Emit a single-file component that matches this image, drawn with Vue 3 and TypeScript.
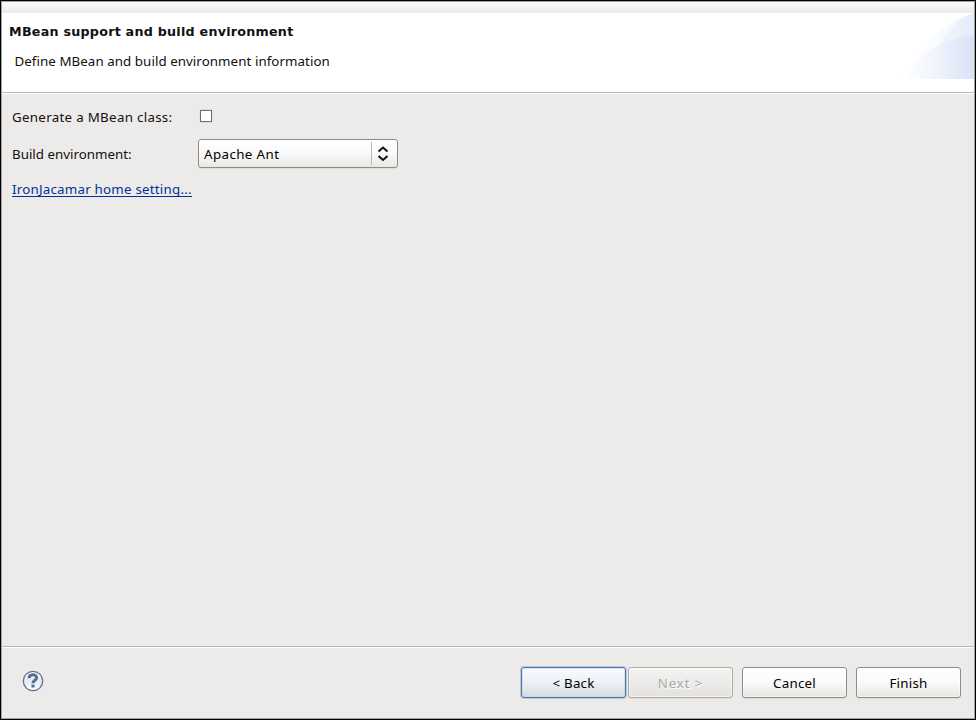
<script setup lang="ts">
import { ref } from 'vue'

interface WizardButton {
  label: string
  kind: 'focused' | 'disabled' | 'normal'
}

const generateMBean = ref(false)
const environment = ref('Apache Ant')
const navigation: WizardButton[] = [
  { label: '< Back', kind: 'focused' },
  { label: 'Next >', kind: 'disabled' },
]
const actions: WizardButton[] = [
  { label: 'Cancel', kind: 'normal' },
  { label: 'Finish', kind: 'normal' },
]
</script>

<template>
  <main class="wizard">
    <div class="strip"></div>
    <header class="banner">
      <div class="heading">
        <h1>MBean support and build environment</h1>
        <p>Define MBean and build environment information</p>
      </div>
      <svg class="swoosh" width="74" height="66" viewBox="0 0 74 66">
        <defs>
          <linearGradient id="outer" x1="0" x2="1">
            <stop offset="0" stop-color="#fff" />
            <stop offset=".45" stop-color="#f9fbfe" />
            <stop offset="1" stop-color="#f0f4fc" />
          </linearGradient>
          <linearGradient id="middle" x1="0" x2="1">
            <stop offset="0" stop-color="#f7f9fe" />
            <stop offset="1" stop-color="#e5ecf9" />
          </linearGradient>
          <linearGradient id="inner" x1="0" x2="1">
            <stop offset="0" stop-color="#fff" />
            <stop offset=".4" stop-color="#f3f6fd" />
            <stop offset="1" stop-color="#d9e2f6" />
          </linearGradient>
        </defs>
        <path d="M4 66C18 39 40 9 74 0V66Z" fill="url(#outer)" />
        <path d="M28 66C34 36 51 7 74 0V66Z" fill="url(#middle)" />
        <path d="M2 66C18 43 42 25 74 22V66Z" fill="url(#inner)" />
      </svg>
    </header>

    <section class="body">
      <label class="row check-row">
        <span class="name wide">Generate a MBean class:</span>
        <input v-model="generateMBean" class="check" type="checkbox" />
      </label>
      <div class="row combo-row">
        <span class="name">Build environment:</span>
        <button class="combo" type="button">
          <span class="value">{{ environment }}</span>
          <span class="arrows">
            <svg width="12" height="16" viewBox="0 0 12 16" fill="none" stroke="#111" stroke-width="2">
              <path d="M1.5 5.5L6 1.5L10.5 5.5M1.5 10L6 14L10.5 10" />
            </svg>
          </span>
        </button>
      </div>
      <div class="row link-row"><a class="link">IronJacamar home setting...</a></div>
    </section>

    <footer class="footer">
      <svg class="help" width="22" height="22" viewBox="0 0 22 22">
        <defs>
          <linearGradient id="disc" x2="0" y2="1">
            <stop stop-color="#fff" />
            <stop offset=".5" stop-color="#e6e9ee" />
            <stop offset="1" stop-color="#fff" />
          </linearGradient>
        </defs>
        <circle cx="11" cy="11" r="9.7" fill="url(#disc)" stroke="#5b7397" stroke-width="1.3" />
        <path d="M7.1 8.3C7.1 3.8 14.6 3.8 14.6 7.7C14.6 10.3 11 10.3 11 13.2" fill="none" stroke="#576e94" stroke-width="3" />
        <path d="M9.4 14.6h3.2v2.9H9.4z" fill="#576e94" />
      </svg>
      <div class="buttons">
        <div class="group">
          <button v-for="b in navigation" :key="b.label" type="button" class="btn" :class="b.kind" :disabled="b.kind === 'disabled'">{{ b.label }}</button>
        </div>
        <button v-for="b in actions" :key="b.label" type="button" class="btn" :class="b.kind">{{ b.label }}</button>
      </div>
    </footer>
  </main>
</template>

<style>
body {
  margin: 0;
  overflow: hidden;
}
</style>

<style scoped>
* {
  box-sizing: border-box;
}
.wizard {
  width: 976px;
  height: 720px;
  display: flex;
  flex-direction: column;
  border: 1px solid #000;
  box-shadow: inset 0 0 0 1px #a4a2a0;
  padding: 1px;
  background: #edebe9;
  background-clip: content-box;
  font: 13.33px/20px "Noto Sans", "Open Sans", sans-serif;
  color: #111;
  white-space: nowrap;
}
.strip {
  height: 11px;
  flex: none;
  background: linear-gradient(#fcfbfb, #ebeae8);
}
.banner {
  height: 80px;
  flex: none;
  display: flex;
  justify-content: space-between;
  background: #fff;
  border-bottom: 1px solid #b9b8b5;
}
h1 {
  margin: 9px 0 0 7px;
  font: bold 12.7px/20px "DejaVu Sans", sans-serif;
  letter-spacing: 0.25px;
}
p {
  margin: 9px 0 0 12.5px;
  letter-spacing: 0.06px;
}
.swoosh {
  display: block;
}
.body {
  flex: 1;
  border-top: 1px solid #fff;
  padding: 13px 10px 0;
}
.row {
  display: flex;
}
.name {
  width: 186px;
  flex: none;
}
.wide {
  letter-spacing: 0.3px;
}
.check-row {
  height: 20px;
}
.check {
  appearance: none;
  width: 12px;
  height: 12px;
  margin: 3px 0 0 2px;
  border: 1px solid #6f6e6c;
  background: #fff;
  box-shadow: 0 0 0 1px #e4e2e0;
}
.combo-row {
  margin-top: 12px;
  height: 29px;
}
.combo-row .name {
  padding-top: 5px;
}
.combo {
  width: 200px;
  height: 29px;
  padding: 0 0 0 5px;
  display: flex;
  align-items: center;
  justify-content: space-between;
  border: 1px solid #8d8c89;
  border-radius: 3px;
  background: linear-gradient(#fff, #fafafa 50%, #e9e8e6);
  box-shadow: 0 1px 1px #dedcda;
  font: inherit;
  letter-spacing: 0.4px;
  color: #000;
}
.arrows {
  width: 26px;
  height: 23px;
  display: flex;
  align-items: center;
  padding-left: 5px;
  border-left: 1px solid #bbb9b6;
}
.link-row {
  margin-top: 11px;
}
.link {
  height: 18px;
  line-height: 20px;
  letter-spacing: 0.22px;
  color: #003399;
  border-bottom: 1px solid #003399;
}
.footer {
  height: 72px;
  flex: none;
  display: flex;
  justify-content: space-between;
  border-top: 1px solid #b9b8b5;
  box-shadow: inset 0 1px #fff;
  padding: 20px 13px 0 20px;
}
.help {
  margin-top: 3px;
}
.buttons {
  display: flex;
  gap: 9px;
}
.group {
  display: flex;
  gap: 2px;
}
.btn {
  width: 105px;
  height: 31px;
  padding: 1px 0 0;
  border: 1px solid #8d8c89;
  border-radius: 3px;
  background: linear-gradient(#fff, #fafafa 50%, #e7e6e4);
  box-shadow: 0 1px 1px #dedcda, inset 0 0 0 1px #ffffff80;
  font: inherit;
  letter-spacing: 0.25px;
  color: #000;
}
.focused {
  border-color: #53769f;
  background: linear-gradient(#f8fbff, #edf1f7 50%, #d6dae1);
  box-shadow: 0 0 0 1px #b5cae3, inset 0 0 0 1px #c5d5e999;
}
.disabled {
  border-color: #adaba8;
  background: linear-gradient(#f4f3f2, #e3e2e0);
  color: #aaa8a5;
  letter-spacing: 0.9px;
  text-shadow: 1px 1px #fff;
}
</style>
